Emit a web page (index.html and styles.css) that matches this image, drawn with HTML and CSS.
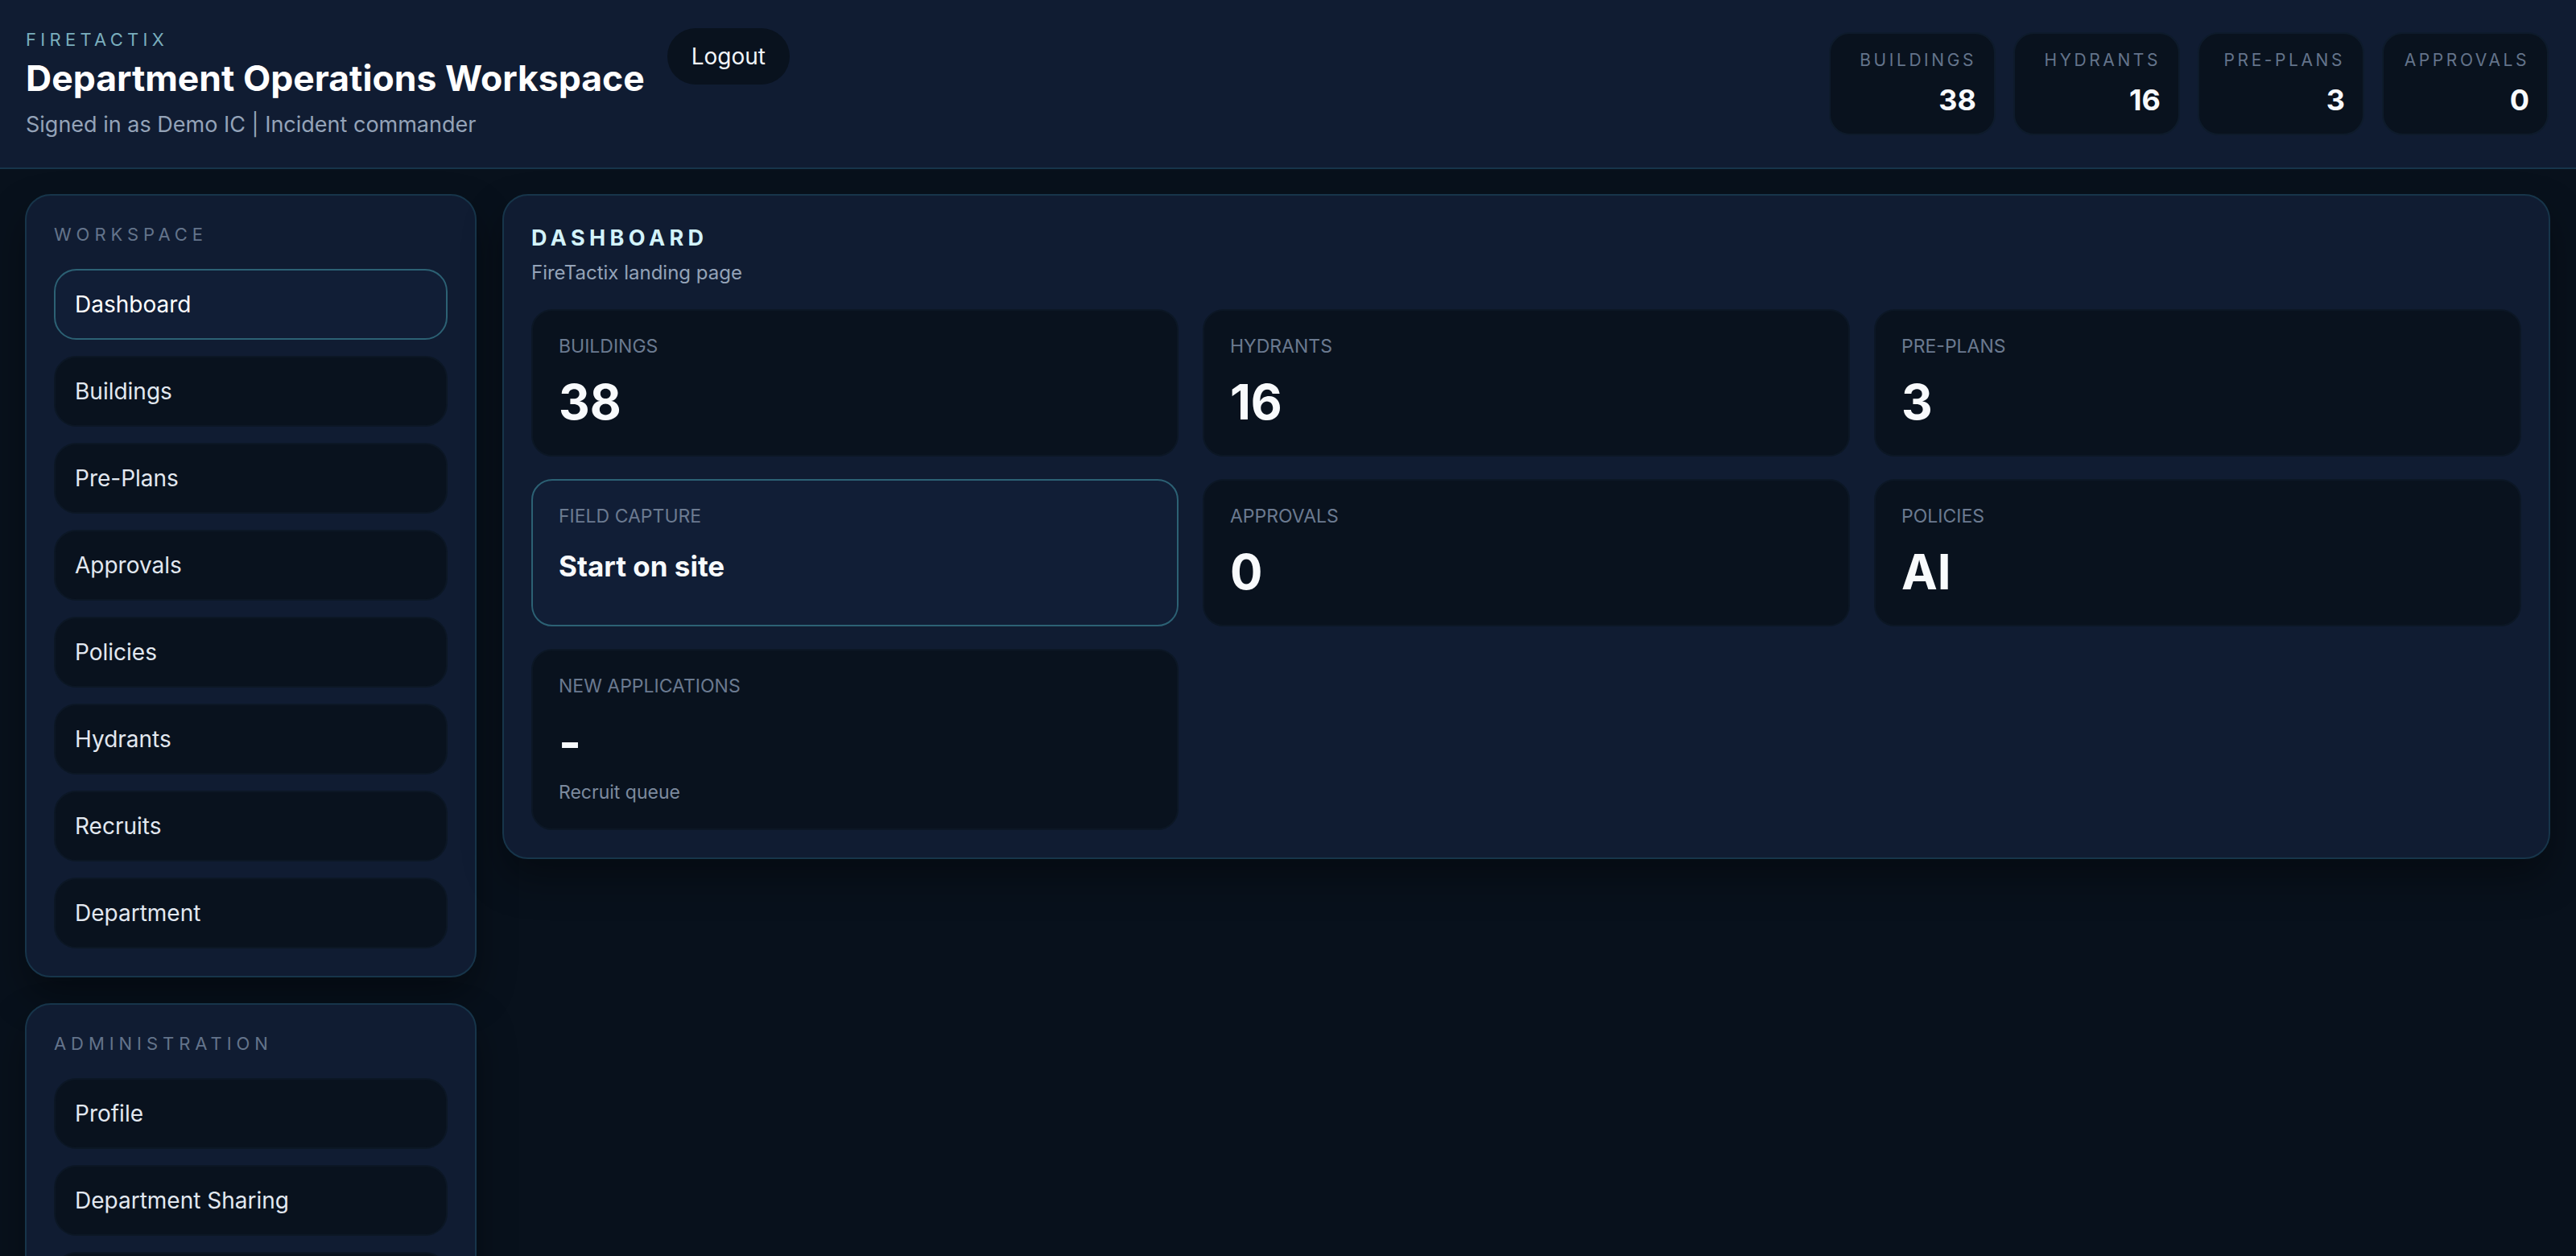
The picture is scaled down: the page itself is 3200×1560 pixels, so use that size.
FILE: index.html
```html
<!DOCTYPE html>
<html lang="en">
<head>
    <meta charset="UTF-8">
    <meta name="viewport" content="width=device-width, initial-scale=1.0">
    <title>FireTactix - Department Operations Workspace</title>
    <link rel="stylesheet" href="styles.css">
</head>

<body>
    <header class="topbar">
        <div class="brand-row">
            <div class="brand">
                <p class="eyebrow">FireTactix</p>
                <h1>Department Operations Workspace</h1>
                <p class="signed-in">Signed in as Demo IC | Incident commander</p>
            </div>
            <button class="logout">Logout</button>
        </div>

        <div class="stat-strip">
            <div class="stat">
                <span class="stat-label">Buildings</span>
                <span class="stat-value">38</span>
            </div>
            <div class="stat">
                <span class="stat-label">Hydrants</span>
                <span class="stat-value">16</span>
            </div>
            <div class="stat">
                <span class="stat-label">Pre-Plans</span>
                <span class="stat-value">3</span>
            </div>
            <div class="stat">
                <span class="stat-label">Approvals</span>
                <span class="stat-value">0</span>
            </div>
        </div>
    </header>

    <div class="layout">
        <!-- Sidebar -->
        <aside class="sidebar">
            <nav class="nav-panel">
                <p class="nav-title">Workspace</p>
                <a class="nav-link active" href="#">Dashboard</a>
                <a class="nav-link" href="#">Buildings</a>
                <a class="nav-link" href="#">Pre-Plans</a>
                <a class="nav-link" href="#">Approvals</a>
                <a class="nav-link" href="#">Policies</a>
                <a class="nav-link" href="#">Hydrants</a>
                <a class="nav-link" href="#">Recruits</a>
                <a class="nav-link" href="#">Department</a>
            </nav>
            <nav class="nav-panel">
                <p class="nav-title">Administration</p>
                <a class="nav-link" href="#">Profile</a>
                <a class="nav-link" href="#">Department Sharing</a>
                <a class="nav-link" href="#">Users</a>
            </nav>
        </aside>

        <!-- Dashboard -->
        <main class="panel">
            <h2>Dashboard</h2>
            <p class="panel-sub">FireTactix landing page</p>

            <div class="card-grid">
                <div class="card">
                    <span class="card-label">Buildings</span>
                    <span class="card-value">38</span>
                </div>
                <div class="card">
                    <span class="card-label">Hydrants</span>
                    <span class="card-value">16</span>
                </div>
                <div class="card">
                    <span class="card-label">Pre-Plans</span>
                    <span class="card-value">3</span>
                </div>
                <a class="card card-action" href="#">
                    <span class="card-label">Field Capture</span>
                    <span class="card-value small">Start on site</span>
                </a>
                <div class="card">
                    <span class="card-label">Approvals</span>
                    <span class="card-value">0</span>
                </div>
                <div class="card">
                    <span class="card-label">Policies</span>
                    <span class="card-value">AI</span>
                </div>
                <div class="card">
                    <span class="card-label">New Applications</span>
                    <span class="card-value">-</span>
                    <span class="card-note">Recruit queue</span>
                </div>
            </div>
        </main>
    </div>
</body>
</html>
```

FILE: styles.css
```css
* {
    box-sizing: border-box;
}

body, html {
    margin: 0;
    padding: 0;
    font-family: Inter, "Noto Sans", Arial, sans-serif;
    background-color: #08111c;
    color: #f8fafc;
}

p {
    margin: 0;
}

/* Header */

.topbar {
    display: flex;
    justify-content: space-between;
    align-items: center;
    height: 210px;
    padding: 0 34px 0 32px;
    background-color: #101c32;
    border-bottom: 2px solid #17344a;
}

.brand-row {
    display: flex;
    align-items: flex-start;
    gap: 28px;
}

.eyebrow {
    font-size: 22px;
    line-height: 28px;
    letter-spacing: 0.24em;
    text-transform: uppercase;
    color: #7aaebd;
}

.brand h1 {
    margin: 6px 0 12px 0;
    font-size: 44.5px;
    line-height: 56px;
    font-weight: 700;
    color: #ffffff;
}

.signed-in {
    font-size: 27px;
    line-height: 36px;
    color: #94a3b8;
}

.logout {
    height: 70px;
    padding: 0 30px;
    border: none;
    border-radius: 35px;
    background-color: #09121e;
    color: #f1f5f9;
    font-family: inherit;
    font-size: 28px;
    cursor: pointer;
}

.stat-strip {
    display: flex;
    gap: 22px;
}

.stat {
    display: flex;
    flex-direction: column;
    align-items: flex-end;
    min-width: 207px;
    padding: 20px 22px 20px 24px;
    background-color: #09121e;
    border: 2px solid #0e1b2b;
    border-radius: 26px;
}

.stat-label {
    font-size: 21px;
    line-height: 26px;
    letter-spacing: 0.17em;
    text-transform: uppercase;
    color: #64748b;
}

.stat-value {
    margin-top: 14px;
    font-size: 36px;
    line-height: 44px;
    font-weight: 700;
    color: #f8fafc;
}

/* Layout */

.layout {
    display: flex;
    align-items: flex-start;
    gap: 32px;
    padding: 31px 32px 32px 31px;
}

.sidebar {
    display: flex;
    flex-direction: column;
    gap: 32px;
    width: 561px;
    flex-shrink: 0;
}

.nav-panel {
    display: flex;
    flex-direction: column;
    gap: 20px;
    padding: 34px 34px 34px 34px;
    background-color: #101c32;
    border: 2px solid #17354a;
    border-radius: 32px;
    box-shadow: 0 24px 48px rgba(0, 0, 0, 0.35);
}

.nav-title {
    margin-bottom: 9px;
    font-size: 22px;
    line-height: 28px;
    letter-spacing: 0.27em;
    text-transform: uppercase;
    color: #64748b;
}

.nav-link {
    display: flex;
    align-items: center;
    height: 88px;
    padding: 0 24px;
    background-color: #09121e;
    border: 2px solid #0c1725;
    border-radius: 28px;
    color: #e2e8f0;
    font-size: 28px;
    text-decoration: none;
}

.nav-link.active {
    background-color: #111e36;
    border-color: #2c6174;
    color: #ffffff;
}

/* Dashboard panel */

.panel {
    flex: 1;
    padding: 36px 34px 34px 34px;
    background-color: #101c32;
    border: 2px solid #17354a;
    border-radius: 32px;
    box-shadow: 0 24px 48px rgba(0, 0, 0, 0.35);
}

.panel h2 {
    margin: 0;
    font-size: 27px;
    line-height: 34px;
    font-weight: 700;
    letter-spacing: 0.2em;
    text-transform: uppercase;
    color: #d3f3fa;
}

.panel-sub {
    margin: 11px 0 30px 0;
    font-size: 24px;
    line-height: 30px;
    color: #94a3b8;
}

.card-grid {
    display: grid;
    grid-template-columns: repeat(3, 1fr);
    gap: 28px 30px;
}

.card {
    display: flex;
    flex-direction: column;
    min-height: 183px;
    padding: 29px 32px 30px 32px;
    background-color: #09121e;
    border: 2px solid #0c1725;
    border-radius: 26px;
    text-decoration: none;
}

.card-action {
    background-color: #111e36;
    border-color: #2c6174;
}

.card-label {
    font-size: 23px;
    line-height: 30px;
    text-transform: uppercase;
    color: #6b7a90;
}

.card-value {
    margin-top: 18px;
    font-size: 60px;
    line-height: 72px;
    font-weight: 700;
    color: #f8fafc;
}

.card-value.small {
    margin-top: 25px;
    font-size: 35px;
    line-height: 44px;
}

.card-note {
    margin-top: 12px;
    font-size: 23px;
    line-height: 30px;
    color: #7c8a9e;
}
```
